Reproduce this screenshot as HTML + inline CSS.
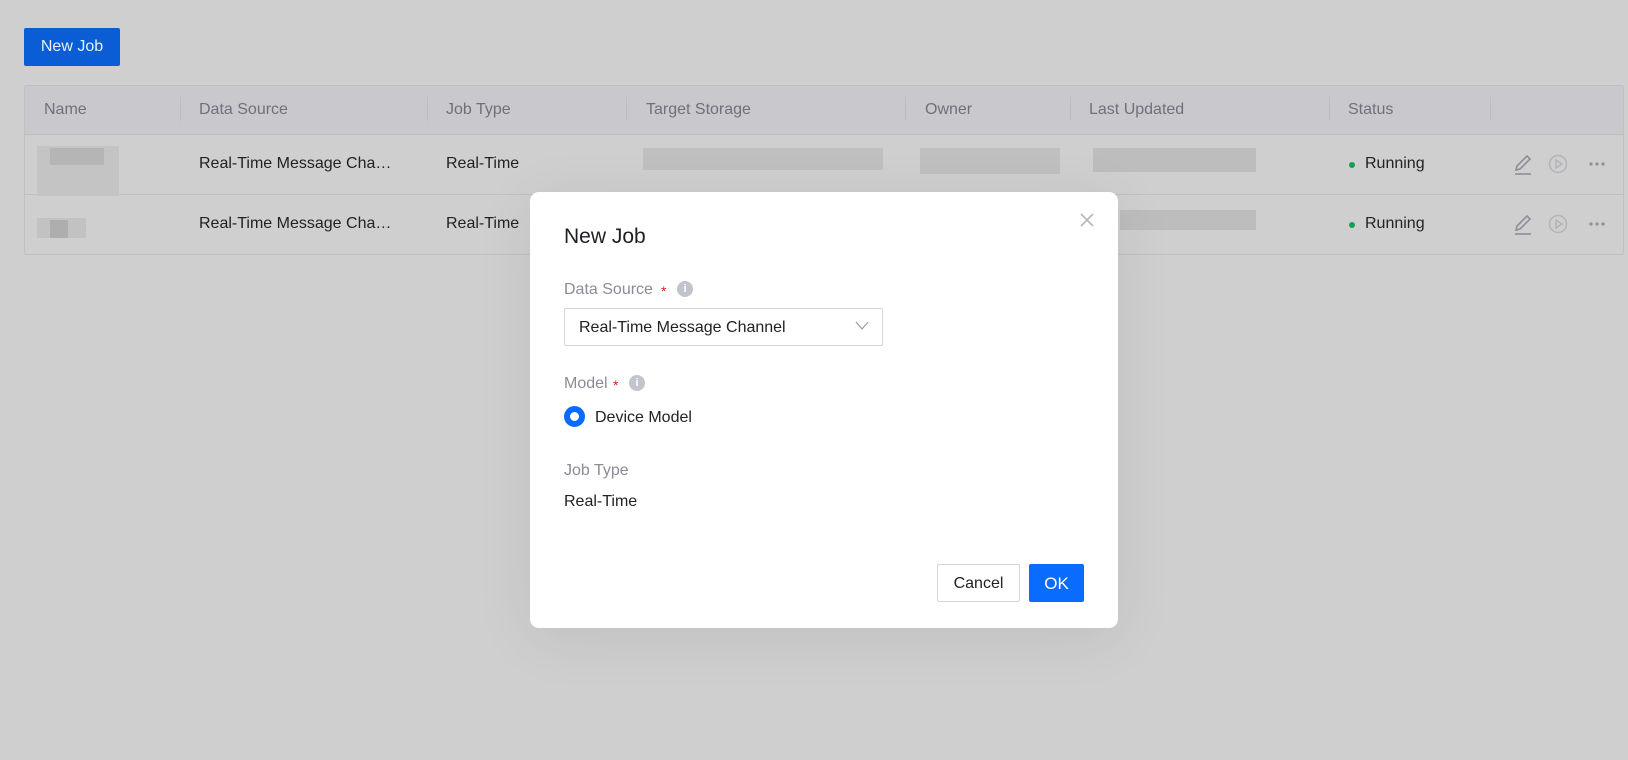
<!DOCTYPE html>
<html><head><meta charset="utf-8"><style>
*{box-sizing:border-box;margin:0;padding:0}
body{width:1628px;height:760px;overflow:hidden;background:#cfcfcf;font-family:"Liberation Sans",Arial,sans-serif;position:relative}
.a{position:absolute}
.btn{left:24px;top:28px;width:96px;height:38px;background:#0b5dd6;border-radius:2px;color:#e8eef8;font-size:16px;line-height:38px;text-align:center}
.tbl{left:24px;top:85px;width:1600px;height:170px;border:1px solid #bfc0c4;border-radius:2px}
.hd{left:0;top:0;width:100%;height:49px;background:#c8c8cd;border-bottom:1px solid #bdbec3}
.r1{left:0;top:108px;width:100%;height:1px;background:#c0c0c4}
.h{font-size:16px;color:#6f717a;top:101px}
.sep{top:97px;width:1px;height:24px;background:#bcbdc2}
.c{font-size:16px;color:#222}
.blk{background:#b9b9b9}
.dot{width:6px;height:6px;border-radius:50%;background:#12a150}
.modal{left:530px;top:192px;width:588px;height:436px;background:#fff;border-radius:9px;box-shadow:0 10px 60px rgba(0,0,0,.08)}
.lbl{font-size:16px;color:#8a8c96}
.star{color:#e02020;font-size:14px}
.info{width:16px;height:16px;border-radius:50%;background:#c2c4cc;color:#fff;font-size:11px;font-weight:bold;text-align:center;line-height:16px}
</style></head><body>
<div class="a btn">New Job</div>
<div class="a tbl"><div class="a hd"></div><div class="a r1" style="top:108px"></div></div>
<div class="a h" style="left:44px">Name</div>
<div class="a h" style="left:199px">Data Source</div>
<div class="a h" style="left:446px">Job Type</div>
<div class="a h" style="left:646px">Target Storage</div>
<div class="a h" style="left:925px">Owner</div>
<div class="a h" style="left:1089px">Last Updated</div>
<div class="a h" style="left:1348px">Status</div>
<div class="a sep" style="left:180px"></div><div class="a sep" style="left:427px"></div><div class="a sep" style="left:626px"></div><div class="a sep" style="left:905px"></div><div class="a sep" style="left:1070px"></div><div class="a sep" style="left:1329px"></div><div class="a sep" style="left:1490px"></div>

<div class="a blk" style="left:37px;top:146px;width:82px;height:50px;background:#c4c4c4"></div>
<div class="a blk" style="left:50px;top:148px;width:54px;height:17px;background:#b5b5b5"></div>
<div class="a blk" style="left:37px;top:218px;width:49px;height:20px;background:#c2c2c2"></div>
<div class="a blk" style="left:50px;top:220px;width:18px;height:18px;background:#aeaeae"></div>
<div class="a blk" style="left:643px;top:148px;width:240px;height:22px;background:#c0c0c0"></div>
<div class="a blk" style="left:920px;top:148px;width:140px;height:26px;background:#c0c0c0"></div>
<div class="a blk" style="left:1093px;top:148px;width:163px;height:24px;background:#bdbdbd"></div>
<div class="a blk" style="left:1120px;top:210px;width:136px;height:20px;background:#bdbdbd"></div>

<div class="a c" style="left:199px;top:155px">Real-Time Message Cha…</div>
<div class="a c" style="left:446px;top:155px">Real-Time</div>
<div class="a c" style="left:199px;top:215px">Real-Time Message Cha…</div>
<div class="a c" style="left:446px;top:215px">Real-Time</div>
<div class="a dot" style="left:1349px;top:162px"></div><div class="a c" style="left:1365px;top:155px">Running</div>
<div class="a dot" style="left:1349px;top:222px"></div><div class="a c" style="left:1365px;top:215px">Running</div>
<svg class="a" style="left:1510px;top:150px" width="110" height="90" viewBox="0 0 110 90">
<g fill="none" stroke="#8d8f97" stroke-width="1.6"><path d="M7 16 L17 6 L20 9 L10 19 L6 20 Z"/><path d="M5 24H21"/><path d="M7 76 L17 66 L20 69 L10 79 L6 80 Z"/><path d="M5 84H21"/></g>
<g fill="none" stroke="#b3b4b9" stroke-width="1.5"><circle cx="48" cy="14" r="8.5"/><path d="M46 10 L52 14 L46 18Z"/><circle cx="48" cy="74" r="8.5"/><path d="M46 70 L52 74 L46 78Z"/></g>
<g fill="#8d8f97"><circle cx="81" cy="14" r="1.6"/><circle cx="87" cy="14" r="1.6"/><circle cx="93" cy="14" r="1.6"/><circle cx="81" cy="74" r="1.6"/><circle cx="87" cy="74" r="1.6"/><circle cx="93" cy="74" r="1.6"/></g></svg>

<div class="a modal"></div>
<div class="a" style="left:564px;top:225px;font-size:21px;color:#1d1f24">New Job</div>
<svg class="a" style="left:1080px;top:213px" width="14" height="14"><path d="M1 1L13 13M13 1L1 13" stroke="#b4b6bc" stroke-width="1.6"/></svg>
<div class="a lbl" style="left:564px;top:281px">Data Source</div>
<div class="a star" style="left:661px;top:283px">*</div>
<div class="a info" style="left:677px;top:281px">i</div>
<div class="a" style="left:564px;top:308px;width:319px;height:38px;border:1px solid #d4d6dc;border-radius:2px"></div>
<div class="a c" style="left:579px;top:319px">Real-Time Message Channel</div>
<svg class="a" style="left:855px;top:321px" width="14" height="10"><path d="M1 1L7 8L13 1" fill="none" stroke="#9a9ca4" stroke-width="1.2"/></svg>
<div class="a lbl" style="left:564px;top:375px">Model</div>
<div class="a star" style="left:613px;top:377px">*</div>
<div class="a info" style="left:629px;top:375px">i</div>
<div class="a" style="left:564px;top:406px;width:21px;height:21px;border-radius:50%;border:6px solid #0a6cff"></div>
<div class="a c" style="left:595px;top:409px">Device Model</div>
<div class="a lbl" style="left:564px;top:462px">Job Type</div>
<div class="a c" style="left:564px;top:493px">Real-Time</div>
<div class="a" style="left:937px;top:564px;width:83px;height:38px;border:1px solid #d4d6dc;border-radius:2px;font-size:16px;color:#222;text-align:center;line-height:37px">Cancel</div>
<div class="a" style="left:1029px;top:564px;width:55px;height:38px;background:#0a6cff;border-radius:2px;font-size:17px;color:#fff;text-align:center;line-height:39px">OK</div>
</body></html>
